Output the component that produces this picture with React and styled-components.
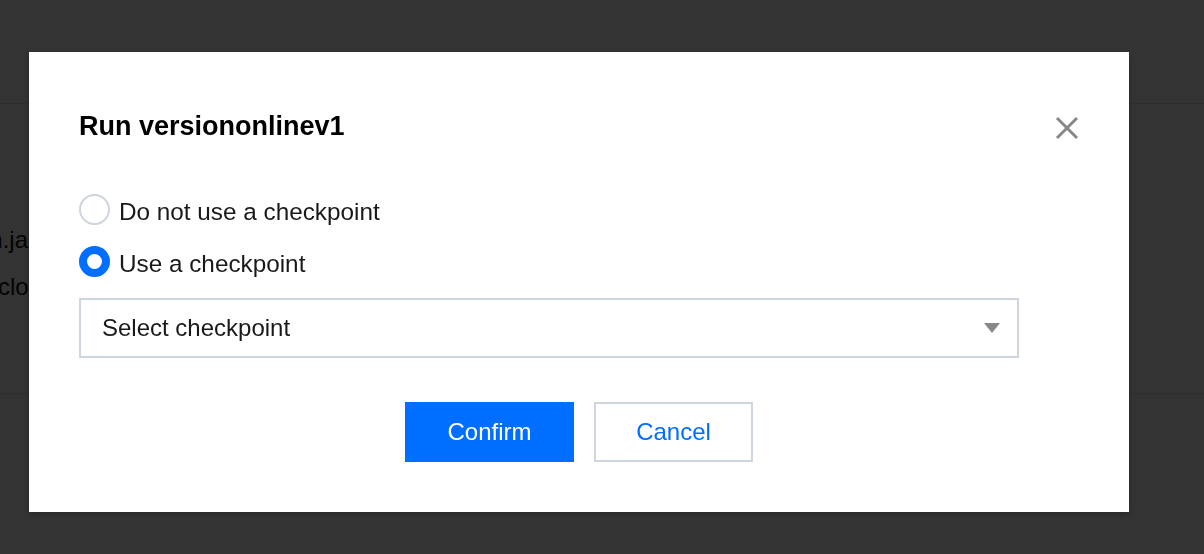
import React, { useState } from 'react'
import styled, { createGlobalStyle } from 'styled-components'

const GlobalStyle = createGlobalStyle`
  html, body {
    margin: 0;
    padding: 0;
    width: 1204px;
    height: 554px;
    overflow: hidden;
    font-family: "Liberation Sans", Arial, Helvetica, sans-serif;
  }
`

// page behind the dialog
const Page = styled.div`
  width: 1204px;
  height: 554px;
  background: #fff;
  color: #111;
  font-size: 24px;
`

const PageHeader = styled.div`
  height: 103px;
  border-bottom: 1px solid #e4e4e4;
`

const PageBody = styled.div`
  height: 290px;
  border-bottom: 1px solid #e4e4e4;
  padding-top: 122px;
  box-sizing: border-box;
  display: flex;
  flex-direction: column;
  gap: 19px;
`

const ClipCell = styled.div`
  width: 36px;
  display: flex;
  justify-content: ${(props) => props.end ? 'flex-end' : 'flex-start'};
  line-height: 28px;
  white-space: nowrap;
  & > span { flex-shrink: 0; }
`

const Backdrop = styled.div`
  position: fixed;
  inset: 0;
  background: rgba(0, 0, 0, 0.8);
  padding: 52px 0 0 29px;
  box-sizing: border-box;
`

const Dialog = styled.div`
  width: 1100px;
  height: 460px;
  box-sizing: border-box;
  background: #fff;
  padding: 56px 50px 50px;
  box-shadow: 0 2px 6px rgba(0, 0, 0, 0.25);
  display: flex;
  flex-direction: column;
`

const Header = styled.div`
  display: flex;
  justify-content: space-between;
  align-items: flex-start;
`

const Title = styled.h2`
  margin: 0;
  font-size: 27px;
  line-height: 36px;
  font-weight: 700;
  color: #000;
`

const CloseButton = styled.button`
  width: 24px;
  height: 24px;
  padding: 0;
  margin-top: 8px;
  border: none;
  background: none;
  cursor: pointer;
  display: flex;
`

const RadioGroup = styled.div`
  margin-top: 50px;
  display: flex;
  flex-direction: column;
  gap: 18px;
`

const RadioRow = styled.label`
  display: flex;
  align-items: flex-start;
  gap: 9px;
  cursor: pointer;
`

const RadioCircle = styled.span`
  width: 31px;
  height: 31px;
  box-sizing: border-box;
  border-radius: 50%;
  background: #fff;
  border: ${(props) => props.checked ? '8px solid #006eff' : '2px solid #cfd5de'};
  flex-shrink: 0;
`

const RadioText = styled.span`
  font-size: 24.3px;
  line-height: 32px;
  padding-top: 2px;
  color: rgba(0, 0, 0, 0.9);
`

const Select = styled.div`
  margin-top: 18px;
  width: 940px;
  height: 60px;
  box-sizing: border-box;
  border: 2px solid #cfd5de;
  display: flex;
  align-items: center;
  justify-content: space-between;
  padding: 0 17px 0 21px;
  font-size: 24px;
  color: rgba(0, 0, 0, 0.9);
  cursor: pointer;
`

const Caret = styled.span`
  width: 0;
  height: 0;
  border-left: 8px solid transparent;
  border-right: 8px solid transparent;
  border-top: 10px solid #888;
`

const Footer = styled.div`
  margin-top: 44px;
  display: flex;
  justify-content: center;
  gap: 20px;
`

const Button = styled.button`
  height: 60px;
  min-width: ${(props) => props.primary ? 169 : 159}px;
  box-sizing: border-box;
  padding: 0 20px;
  font-family: inherit;
  font-size: 24px;
  cursor: pointer;
  border: 2px solid ${(props) => props.primary ? '#006eff' : '#cfd5de'};
  background: ${(props) => props.primary ? '#006eff' : '#fff'};
  color: ${(props) => props.primary ? '#fff' : '#006eff'};
`

const CloseIcon = () => (
  <svg width='24' height='24' viewBox='0 0 24 24'>
    <path d='M2 2 L22 22 M22 2 L2 22' stroke='#888' strokeWidth='3' fill='none' />
  </svg>
)

const options = [
  { id: 'none', label: 'Do not use a checkpoint' },
  { id: 'use', label: 'Use a checkpoint' }
]

const App = () => {
  const [choice, setChoice] = useState('use')

  return (
    <>
      <GlobalStyle />
      <Page>
        <PageHeader />
        <PageBody>
          <ClipCell end><span>app-main.jar</span></ClipCell>
          <ClipCell><span style={{ marginLeft: -2 }}>cloud</span></ClipCell>
        </PageBody>
      </Page>
      <Backdrop>
        <Dialog>
          <Header>
            <Title>Run versiononlinev1</Title>
            <CloseButton aria-label='Close'><CloseIcon /></CloseButton>
          </Header>
          <RadioGroup>
            {options.map((o) => (
              <RadioRow key={o.id} onClick={() => setChoice(o.id)}>
                <RadioCircle checked={choice === o.id} />
                <RadioText>{o.label}</RadioText>
              </RadioRow>
            ))}
          </RadioGroup>
          <Select>
            <span>Select checkpoint</span>
            <Caret />
          </Select>
          <Footer>
            <Button primary>Confirm</Button>
            <Button>Cancel</Button>
          </Footer>
        </Dialog>
      </Backdrop>
    </>
  )
}

export default App
